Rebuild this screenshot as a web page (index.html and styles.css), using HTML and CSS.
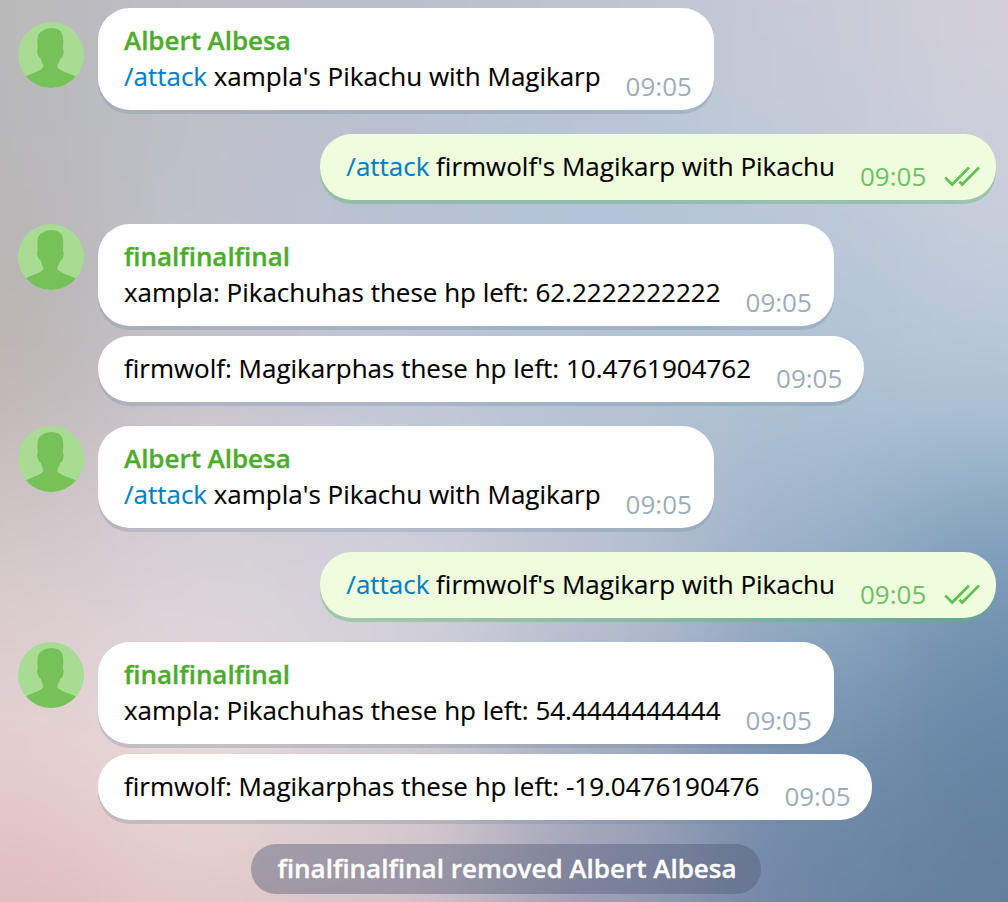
FILE: index.html
```html
<!DOCTYPE html>
<html lang="en">
<head>
<meta charset="utf-8">
<title>Group chat</title>
<link rel="stylesheet" href="styles.css">
</head>
<body>
<svg class="wallpaper" width="1008" height="902" viewBox="0 0 1008 902" aria-hidden="true">
  <defs>
    <filter id="soft" filterUnits="userSpaceOnUse" x="-400" y="-400" width="1808" height="1702" color-interpolation-filters="sRGB"><feGaussianBlur stdDeviation="62"/></filter>
  </defs>
  <g id="mesh" filter="url(#soft)"></g>
</svg>
<svg class="sprites" aria-hidden="true">
  <symbol id="person" viewBox="0 0 66 66">
    <circle cx="33" cy="33" r="33" fill="#a8dc92"/>
    <path fill="#77c159" d="M8 54.5C13 51 22 49.800 25 45.500C26.300 43.500 23.300 40.500 22.800 36.500C20 36 18 28 19.800 26.500C18.800 15 19.500 11 25 8.500C29 5 38 5 42 8.500C46 12 45.500 20 44.800 26.500C46.500 28 45.500 36 42.500 36.500C41.500 40.500 38.500 43 39.500 45.500C42.500 49 53 52 58 54.500A33 33 0 0 1 8 54.500Z"/>
  </symbol>
  <symbol id="read" viewBox="0 0 36 22">
    <path fill="none" stroke="#5dc452" stroke-width="2.700" d="M1.200 11.500L8.200 18.500L25 1.500M15.500 15.800L18.200 18.500L35 1.500"/>
  </symbol>
</svg>
<main class="chat">
  <section class="group first">
    <svg class="avatar"><use href="#person"/></svg>
    <div class="stack">
      <article class="bubble"><div class="name">Albert Albesa</div><div class="line"><p><a>/attack</a> xampla's Pikachu with Magikarp</p><time>09:05</time></div></article>
    </div>
  </section>
  <section class="group own">
    <article class="bubble out"><div class="line"><p><a>/attack</a> firmwolf's Magikarp with Pikachu</p><time>09:05</time><svg class="check"><use href="#read"/></svg></div></article>
  </section>
  <section class="group">
    <svg class="avatar"><use href="#person"/></svg>
    <div class="stack">
      <article class="bubble"><div class="name">finalfinalfinal</div><div class="line"><p>xampla: Pikachuhas these hp left: 62.2222222222</p><time>09:05</time></div></article>
      <article class="bubble"><div class="line"><p>firmwolf: Magikarphas these hp left: 10.4761904762</p><time>09:05</time></div></article>
    </div>
  </section>
  <section class="group">
    <svg class="avatar"><use href="#person"/></svg>
    <div class="stack">
      <article class="bubble"><div class="name">Albert Albesa</div><div class="line"><p><a>/attack</a> xampla's Pikachu with Magikarp</p><time>09:05</time></div></article>
    </div>
  </section>
  <section class="group own">
    <article class="bubble out"><div class="line"><p><a>/attack</a> firmwolf's Magikarp with Pikachu</p><time>09:05</time><svg class="check"><use href="#read"/></svg></div></article>
  </section>
  <section class="group">
    <svg class="avatar"><use href="#person"/></svg>
    <div class="stack">
      <article class="bubble"><div class="name">finalfinalfinal</div><div class="line"><p>xampla: Pikachuhas these hp left: 54.4444444444</p><time>09:05</time></div></article>
      <article class="bubble"><div class="line"><p>firmwolf: Magikarphas these hp left: -19.0476190476</p><time>09:05</time></div></article>
    </div>
  </section>
  <div class="service">finalfinalfinal removed Albert Albesa</div>
</main>
<script src="wallpaper.js"></script>
</body>
</html>
```
FILE: styles.css
```css
* { box-sizing: border-box; }
body {
  margin: 0;
  background: #b9c0ce;
  font: 26px/36px "Open Sans", "Noto Sans", sans-serif;
  color: #000;
}
.wallpaper { position: absolute; top: 0; left: 0; z-index: -1; }
.sprites { position: absolute; width: 0; height: 0; }
.chat {
  display: flex;
  flex-direction: column;
  gap: 24px;
  width: 1008px;
  height: 902px;
  padding: 8px 12px 8px 18px;
  overflow: hidden;
}
.group { display: flex; align-items: flex-start; gap: 14px; }
.own { justify-content: flex-end; }
.avatar { flex: none; width: 66px; height: 66px; }
.first .avatar { margin-top: 14px; }
.stack { display: flex; flex-direction: column; align-items: flex-start; gap: 10px; }
.bubble {
  padding: 14px 22px 16px 26px;
  border-radius: 32px;
  background: #fff;
  box-shadow: 0 4px 0 rgba(116, 139, 160, .3);
  white-space: nowrap;
}
.out {
  padding-right: 16px;
  background: #effddd;
  box-shadow: 0 4px 0 rgba(90, 184, 110, .42);
}
.name {
  font-weight: 600;
  letter-spacing: -.04px;
  color: #4eac2d;
  -webkit-text-stroke: .35px currentColor;
}
.line { display: flex; align-items: flex-start; }
.line p { margin: 0; letter-spacing: -.01px; -webkit-text-stroke: .15px currentColor; }
.line a { color: #0080c6; }
.line time { width: 66px; height: 36px; margin: 10px 0 -10px 25px; color: #9fadb9; }
.out time { color: #6cc264; }
.check { flex: none; width: 36px; height: 22px; margin: 18px 0 -4px 18px; }
.service {
  align-self: center;
  margin-left: -2px;
  height: 50px;
  padding: 6px 24px 8px 26px;
  border-radius: 25px;
  background: rgba(80, 91, 118, .43);
  color: #fff;
  font-weight: 600;
  white-space: nowrap;
  -webkit-text-stroke: .35px currentColor;
}
```
FILE: wallpaper.js
```js
// Colour samples of the wallpaper, one row per height, spread by a blur.
const xs = [-300, 100, 300, 500, 700, 900, 1308];
const rows = [
  [-300, 60, "#b9b9b9 #bebfc4 #b9bfcb #bfc4d1 #c8cad6 #d3cfd9"],
  [60, 160, "#b8b8ba #bdc0c8 #b9c1d0 #b8c6d8 #c5cbd8 #cfd0da"],
  [160, 270, "#b9b6b6 #bfc1cb #b7c2d5 #b1c4d9 #b9c7d8 #c9cedb"],
  [270, 380, "#bbb3b1 #c3c1ca #bdc4d5 #b2c3d6 #b0c4d7 #bac9d9"],
  [380, 480, "#c3baba #cbc7ce #c3c8d7 #b6c2d4 #abc0d1 #a9c0d2"],
  [480, 590, "#d1c7c9 #d7d0d7 #d0cfda #bac1d2 #9bb1c8 #7f9fbb"],
  [590, 690, "#dbcecf #ddd4da #d3d2dc #b9bfd1 #8ea7c1 #6f90af"],
  [690, 790, "#e6d0d1 #eadcd9 #d3cccf #a4acc0 #7591af #6685a5"],
  [790, 860, "#e3c4c6 #e7d5d3 #d9cdd1 #a5a8bc #7089a9 #62829f"],
  [860, 1302, "#debabd #e1c5c7 #d3c2c8 #9a9bb2 #6e84a4 #627f9d"]
];
const mesh = document.getElementById("mesh");
for (const [top, bottom, colours] of rows) {
  colours.split(" ").forEach((fill, i) => {
    const r = document.createElementNS("http://www.w3.org/2000/svg", "rect");
    const box = { x: xs[i], y: top, width: xs[i + 1] - xs[i] + 1, height: bottom - top + 1, fill };
    for (const key in box) r.setAttribute(key, box[key]);
    mesh.append(r);
  });
}
```
